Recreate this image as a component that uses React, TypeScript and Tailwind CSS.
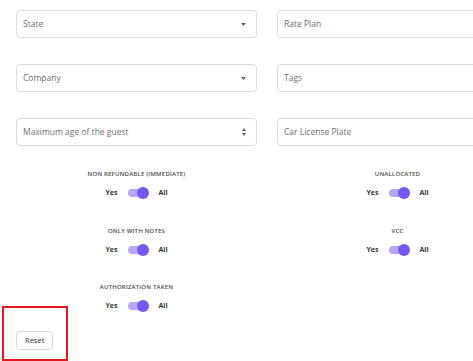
import React from "react";

const font = { fontFamily: '"Open Sans", "Liberation Sans", sans-serif' };

const Caret = () => (
  <svg width="5" height="3" viewBox="0 0 5 3" className="shrink-0">
    <path d="M0 0 L5 0 L2.5 3 Z" fill="#5f5f5f" />
  </svg>
);

const Spinner = () => (
  <div className="flex flex-col items-center gap-[2px]">
    <svg width="4" height="3" viewBox="0 0 4 3">
      <path d="M0 3 L4 3 L2 0 Z" fill="#5f5f5f" />
    </svg>
    <svg width="4" height="3" viewBox="0 0 4 3">
      <path d="M0 0 L4 0 L2 3 Z" fill="#5f5f5f" />
    </svg>
  </div>
);

const Field = ({ label, icon }: { label: string; icon?: React.ReactNode }) => (
  <div className="h-[28px] border border-[#dcdde0] rounded-[4px] bg-white flex items-center justify-between pl-[6px] pr-[10px]">
    <span className="text-[8.5px] text-[#707070]">{label}</span>
    {icon}
  </div>
);

const Toggle = ({ label }: { label: string }) => (
  <div className="flex flex-col items-center">
    <div className="text-[6px] font-semibold tracking-[0.2px] text-[#4a4a4a] uppercase leading-none">
      {label}
    </div>
    <div className="flex items-center mt-[11px] gap-[10px]">
      <span className="text-[7px] font-bold text-[#333]">Yes</span>
      <div className="relative w-[19px] h-[8px] rounded-full bg-[#b5a6f6] mx-[1px]">
        <div className="absolute right-[-2px] top-[-2px] w-[12px] h-[12px] rounded-full bg-[#7558f1]" />
      </div>
      <span className="text-[7px] font-bold text-[#333]">All</span>
    </div>
  </div>
);

export default function App() {
  return (
    <div className="w-[473px] h-[361px] bg-white overflow-hidden relative" style={font}>
      <div className="w-[560px] pl-[16px] pt-[10px]">
        <div className="grid grid-cols-[241px_241px] gap-x-[20px] gap-y-[26px]">
          <Field label="State" icon={<Caret />} />
          <Field label="Rate Plan" />
          <Field label="Company" icon={<Caret />} />
          <Field label="Tags" />
          <Field label="Maximum age of the guest" icon={<Spinner />} />
          <Field label="Car License Plate" />
        </div>
        <div className="grid grid-cols-[241px_241px] gap-x-[20px] gap-y-[29px] mt-[25px]">
          <Toggle label="Non refundable (immediate)" />
          <Toggle label="Unallocated" />
          <Toggle label="Only with notes" />
          <Toggle label="VCC" />
          <Toggle label="Authorization taken" />
          <div />
        </div>
        <div className="mt-[13px]">
          <button className="h-[19px] px-[8px] border border-[#d8d9dc] rounded-[4px] bg-white text-[7.5px] text-[#333]">
            Reset
          </button>
        </div>
      </div>
      <div className="absolute left-[2px] top-[306px] w-[66px] h-[55px] border-2 border-[#e3191f]" />
    </div>
  );
}
